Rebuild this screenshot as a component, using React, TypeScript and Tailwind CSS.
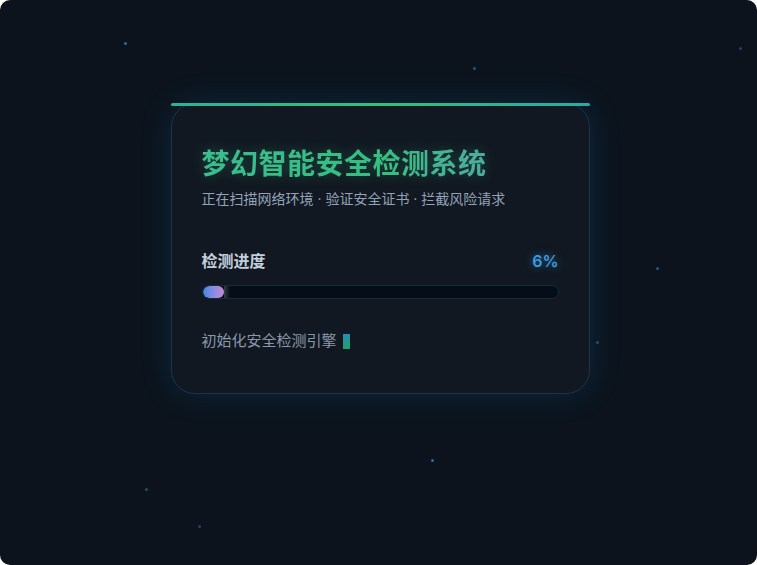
const stars = [
  { x: 124, y: 42, o: 'opacity-90' },
  { x: 473, y: 67, o: 'opacity-70' },
  { x: 739, y: 47, o: 'opacity-50' },
  { x: 656, y: 267, o: 'opacity-70' },
  { x: 596, y: 341, o: 'opacity-60' },
  { x: 431, y: 459, o: 'opacity-90' },
  { x: 145, y: 488, o: 'opacity-60' },
  { x: 198, y: 525, o: 'opacity-50' },
]

export default function App() {
  return (
    <div className="h-[565px] w-[757px] bg-white font-['Inter','Noto_Sans_CJK_SC',sans-serif]">
      <div className="relative flex h-full w-full items-start justify-center overflow-hidden rounded-[10px] bg-[#0c131c] pl-[3px] pt-[103px]">
        {stars.map((s, i) => (
          <span
            key={i}
            className={`absolute h-[3px] w-[3px] rounded-full bg-[#2a78b0] ${s.o}`}
            style={{ left: s.x, top: s.y }}
          />
        ))}

        <div className="relative w-[419px] rounded-[24px] border border-[#1b3449] bg-[#111821] px-[30px] pb-[41px] pt-[43px] shadow-[0_0_32px_rgba(14,130,200,0.2)]">
          <div className="absolute -left-px -right-px -top-px h-[3px] rounded-full bg-gradient-to-r from-[#2ab39a] via-[#2fc279] to-[#2aa9a6]" />

          <h1 className="bg-gradient-to-r from-[#3bbd8f] via-[#36be80] to-[#5a9db2] bg-clip-text text-[28px] font-bold leading-[34px] tracking-[0.5px] text-transparent [filter:drop-shadow(0_0_6px_rgba(52,192,140,0.3))]">
            梦幻智能安全检测系统
          </h1>
          <p className="mt-[8px] text-[14px] leading-[20px] text-[#93a3b8]">
            正在扫描网络环境 · 验证安全证书 · 拦截风险请求
          </p>

          <div className="mt-[40px] flex items-center justify-between">
            <span className="text-[16px] font-semibold leading-[24px] text-[#c3cfdc]">检测进度</span>
            <span className="text-[16px] font-semibold leading-[24px] text-[#3d9be0] [text-shadow:0_0_8px_rgba(59,155,224,0.6)]">
              6%
            </span>
          </div>

          <div className="mt-[12px] h-[14px] w-full overflow-hidden rounded-full border border-[#162a3d] bg-[#050d18]">
            <div className="relative h-full w-[6%] rounded-full bg-gradient-to-r from-[#3b86e6] to-[#c48ad8]">
              <span className="absolute -right-[6px] top-0 h-full w-[6px] bg-gradient-to-r from-white/20 to-transparent" />
            </div>
          </div>

          <div className="mt-[31px] flex items-center text-[15px] leading-[22px] text-[#8a98aa]">
            <span>初始化安全检测引擎</span>
            <span className="ml-[6px] inline-block h-[15px] w-[7px] bg-gradient-to-b from-[#2a8bb3] to-[#22a262]" />
          </div>
        </div>
      </div>
    </div>
  )
}
